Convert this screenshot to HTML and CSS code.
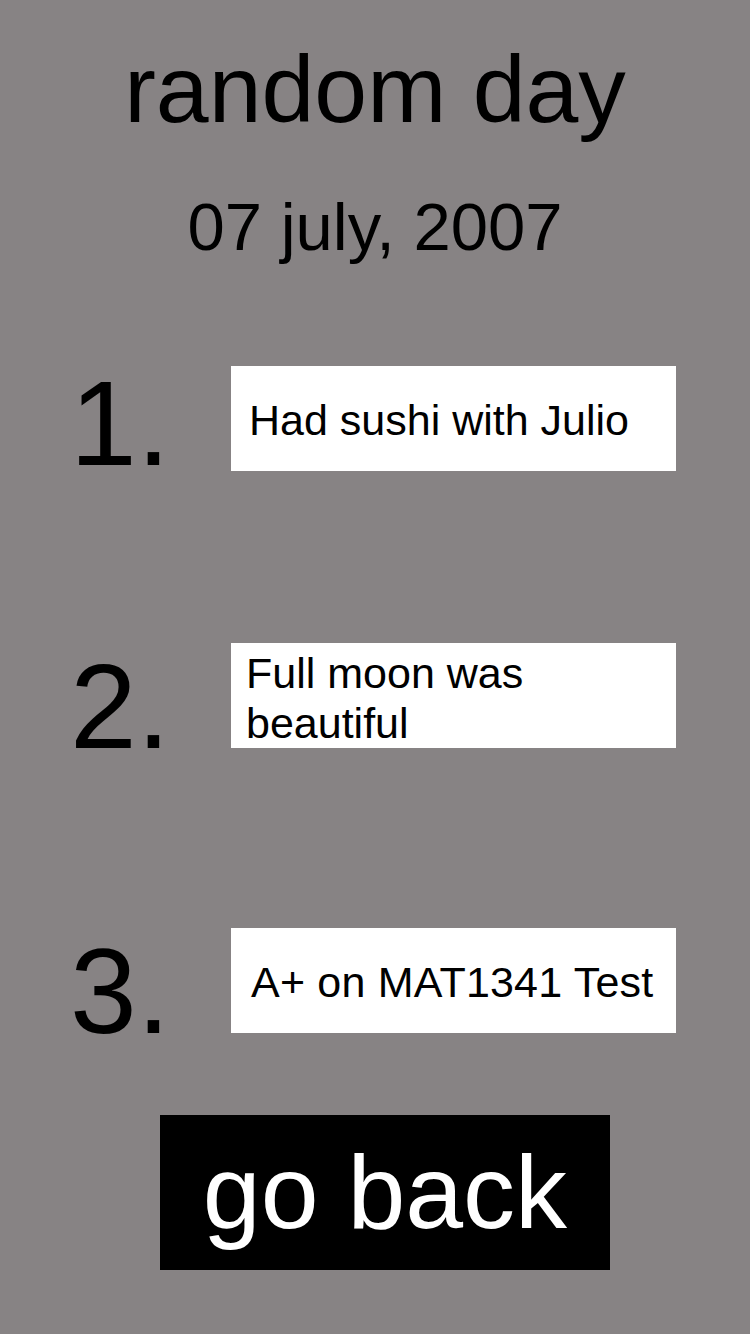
FILE: index.html
```html
<!DOCTYPE html>
<html lang="en">
<head>
<meta charset="utf-8">
<title>random day</title>
<link rel="stylesheet" href="styles.css">
</head>
<body>
<main class="page">
  <header class="head">
    <h1 class="title">random day</h1>
    <p class="date">07 july, 2007</p>
  </header>
  <ol class="list">
    <li class="row row-1">
      <span class="num num-1">1.</span>
      <div class="box box-1">Had sushi with Julio</div>
    </li>
    <li class="row row-2">
      <span class="num">2.</span>
      <div class="box box-2">Full moon was beautiful</div>
    </li>
    <li class="row row-3">
      <span class="num">3.</span>
      <div class="box box-3">A+ on MAT1341 Test</div>
    </li>
  </ol>
  <button class="back" type="button">go back</button>
</main>
</body>
</html>
```
FILE: styles.css
```css
html, body {
  margin: 0;
  padding: 0;
}
body {
  background: #878384;
  font-family: "Liberation Sans", Arial, sans-serif;
  color: #000;
  width: 750px;
  min-height: 1334px;
}
.page {
  display: flex;
  flex-direction: column;
  padding-top: 42px;
}
.head {
  display: flex;
  flex-direction: column;
  align-items: center;
}
.title {
  margin: 0;
  font-size: 95px;
  font-weight: normal;
  line-height: 95px;
}
.date {
  margin: 56px 0 0;
  font-size: 67px;
  line-height: 67px;
}
.list {
  list-style: none;
  margin: 106px 0 0;
  padding: 0;
  display: flex;
  flex-direction: column;
}
.row {
  display: flex;
  align-items: flex-end;
  padding-left: 70px;
}
.row-2 { margin-top: 172px; }
.row-3 { margin-top: 180px; }
.num {
  width: 161px;
  font-size: 120px;
  line-height: 83px;
}
.num-1 { margin-bottom: 6px; }
.box {
  box-sizing: border-box;
  width: 445px;
  height: 105px;
  background: #fff;
  font-size: 43px;
  line-height: 50px;
  display: flex;
  align-items: center;
}
.box-1 {
  padding-left: 18px;
  padding-top: 3px;
}
.box-2 {
  padding-left: 15px;
  padding-right: 10px;
  align-items: flex-start;
  padding-top: 5px;
}
.box-3 {
  padding-left: 20px;
  padding-top: 3px;
  letter-spacing: 0.2px;
}
.back {
  margin: 82px 0 0 160px;
  width: 450px;
  height: 155px;
  border: 0;
  padding: 0;
  background: #000;
  color: #fff;
  font-family: "Liberation Sans", Arial, sans-serif;
  font-size: 104px;
  line-height: 155px;
  padding-bottom: 4px;
  cursor: pointer;
}
```
